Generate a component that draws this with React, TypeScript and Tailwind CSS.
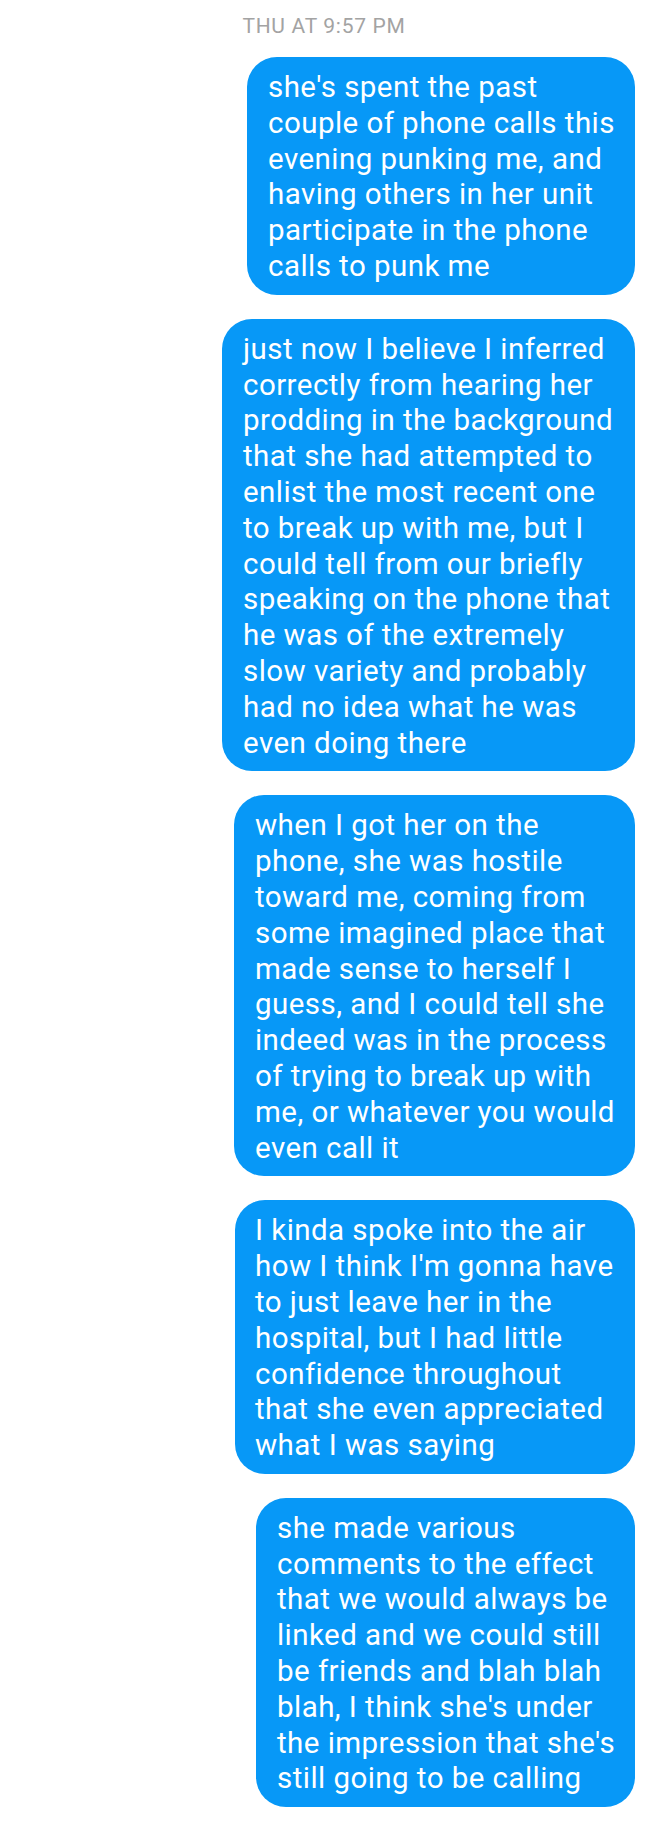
const messages: { width: string; pad: string; lines: string[] }[] = [
  {
    width: 'w-[388px]',
    pad: 'pl-[21px]',
    lines: [
      "she's spent the past",
      'couple of phone calls this',
      'evening punking me, and',
      'having others in her unit',
      'participate in the phone',
      'calls to punk me',
    ],
  },
  {
    width: 'w-[413px]',
    pad: 'pl-[21px]',
    lines: [
      'just now I believe I inferred',
      'correctly from hearing her',
      'prodding in the background',
      'that she had attempted to',
      'enlist the most recent one',
      'to break up with me, but I',
      'could tell from our briefly',
      'speaking on the phone that',
      'he was of the extremely',
      'slow variety and probably',
      'had no idea what he was',
      'even doing there',
    ],
  },
  {
    width: 'w-[401px]',
    pad: 'pl-[21px]',
    lines: [
      'when I got her on the',
      'phone, she was hostile',
      'toward me, coming from',
      'some imagined place that',
      'made sense to herself I',
      'guess, and I could tell she',
      'indeed was in the process',
      'of trying to break up with',
      'me, or whatever you would',
      'even call it',
    ],
  },
  {
    width: 'w-[400px]',
    pad: 'pl-[20px]',
    lines: [
      'I kinda spoke into the air',
      "how I think I'm gonna have",
      'to just leave her in the',
      'hospital, but I had little',
      'confidence throughout',
      'that she even appreciated',
      'what I was saying',
    ],
  },
  {
    width: 'w-[379px]',
    pad: 'pl-[21px]',
    lines: [
      'she made various',
      'comments to the effect',
      'that we would always be',
      'linked and we could still',
      'be friends and blah blah',
      "blah, I think she's under",
      "the impression that she's",
      'still going to be calling',
    ],
  },
];

export default function App() {
  return (
    <div className="w-[648px] min-h-[1822px] bg-white font-['Roboto',sans-serif] flex flex-col items-end pr-[13px] pt-[14px]">
      <div className="self-stretch pl-[13px] text-center text-[21px] leading-[24px] tracking-[0.7px] text-[#a3a3a3] mb-[19px]">
        THU AT 9:57 PM
      </div>
      <div className="flex flex-col items-end gap-[24px]">
        {messages.map((m, i) => (
          <div
            key={i}
            className={`${m.width} ${m.pad} pr-[8px] pt-[13px] pb-[10px] rounded-[30px] bg-[#0798f7] text-white text-[29.5px] leading-[35.8px] tracking-[0.45px]`}
          >
            {m.lines.map((line, j) => (
              <div key={j} className="whitespace-nowrap">
                {line}
              </div>
            ))}
          </div>
        ))}
      </div>
    </div>
  );
}
